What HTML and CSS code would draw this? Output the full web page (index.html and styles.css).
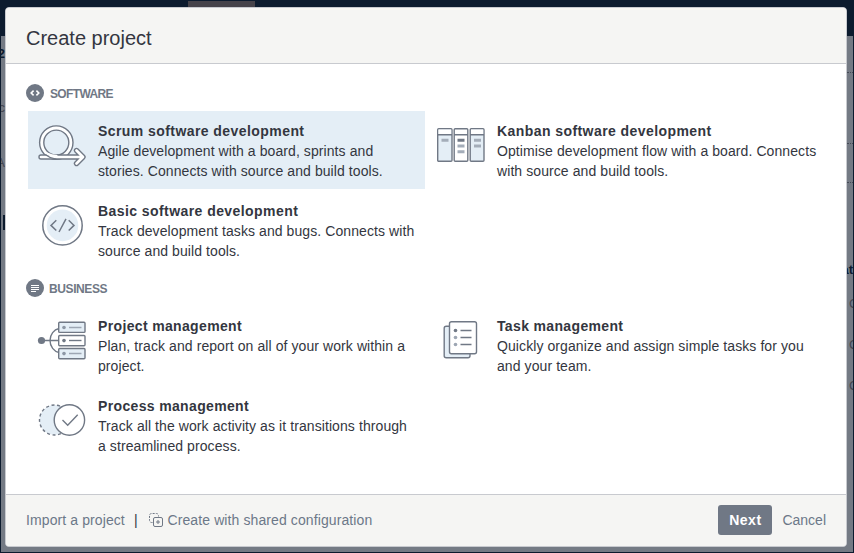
FILE: index.html
```html
<!DOCTYPE html>
<html lang="en">
<head>
<meta charset="utf-8">
<title>Create project</title>
<link rel="stylesheet" href="styles.css">
</head>
<body>
<div class="page">
  <div class="topbar"></div>
  <div class="active-tab"></div>
  <div class="peek left" style="top:46px">2</div>
  <div class="peek left thin" style="top:100px">c</div>
  <div class="peek left thin" style="top:155px">A</div>
  <div class="peek bar"></div>
  <div class="peek right" style="top:262px">at</div>
  <div class="peek right thin" style="top:296px">C</div>
  <div class="peek right thin" style="top:337px">C</div>
  <div class="peek right thin" style="top:378px">C</div>
  <div class="rule" style="top:72px"></div>
  <div class="rule" style="top:143px"></div>
  <div class="rule" style="top:182px"></div>
</div>
<section class="dialog">
  <header class="head"><h1>Create project</h1></header>
  <main class="content">
    <h2 class="group software">
      <svg width="18" height="18" viewBox="0 0 18 18"><circle cx="9" cy="9" r="9" fill="#707885"/><path d="M7.600 6.600 5.200 9l2.400 2.400M10.400 6.600 12.800 9l-2.400 2.400" fill="none" stroke="#fff" stroke-width="1.600"/></svg>
      <span>SOFTWARE</span>
    </h2>
    <div class="grid">
      <article class="item selected">
        <svg class="icon" width="50" height="50" viewBox="0 0 50 50" fill="none" stroke-linejoin="round" stroke-linecap="round">
          <circle cx="19.300" cy="21.600" r="14.600" stroke="#707885" stroke-width="5.600"/>
          <circle cx="19.300" cy="21.600" r="14.600" stroke="#fff" stroke-width="2.800"/>
          <path d="M4 36H45M39.500 29.500l6.500 6.500-6.500 6.500" stroke="#707885" stroke-width="5.400"/>
          <path d="M4 36H45M39.500 29.500l6.500 6.500-6.500 6.500" stroke="#fff" stroke-width="2.700"/>
          <path d="M10.500 32.800c2.600 1.400 5 2.200 8.800 2.200" stroke="#fff" stroke-width="2.600"/>
          <path d="M9 34c3 2.400 6 3.800 10 4.200" stroke="#707885" stroke-width="1.200"/>
        </svg>
        <div><h3>Scrum software development</h3><p>Agile development with a board, sprints and<br>stories. Connects with source and build tools.</p></div>
      </article>
      <article class="item">
        <svg class="icon" width="50" height="50" viewBox="0 0 50 50" stroke="#707885" stroke-width="1.4">
          <rect x="1.700" y="7.700" width="14.300" height="32.500" rx="1" fill="#e4eef6"/>
          <rect x="18.200" y="7.700" width="13.600" height="32.500" rx="1" fill="#fff"/>
          <rect x="34.200" y="7.700" width="13.800" height="32.500" rx="1" fill="#e4eef6"/>
          <path d="M2.500 8.500h12.700v4.700H2.500zM35 8.500h12.200v4.700H35z" fill="#fff" stroke="none"/>
          <path d="M2 13.700h14M18 13.700h14M34 13.700h14"/>
          <path d="M5.500 19.300h7M38 19.300h7M38 25h7M21.500 25h7M21.500 30.700h7" stroke="#a4adb9" stroke-width="3"/>
          <path d="M21.500 19.300h7" stroke-width="3"/>
        </svg>
        <div><h3>Kanban software development</h3><p>Optimise development flow with a board. Connects<br>with source and build tools.</p></div>
      </article>
      <article class="item">
        <svg class="icon" width="50" height="50" viewBox="0 0 50 50" fill="none" stroke="#707885" stroke-width="1.5">
          <circle cx="25.500" cy="24.400" r="19.700" fill="#fff"/><circle cx="25.500" cy="24.400" r="15.800" fill="#e4eef6" stroke="none"/>
          <path d="m19.300 19.300-5.300 5.100 5.300 5.100m12.400-10.200 5.300 5.100-5.300 5.100M29 17.800l-7 13.200"/>
        </svg>
        <div><h3>Basic software development</h3><p>Track development tasks and bugs. Connects with<br>source and build tools.</p></div>
      </article>
    </div>
    <h2 class="group business">
      <svg width="18" height="18" viewBox="0 0 18 18"><circle cx="9" cy="9" r="9" fill="#707885"/><path d="M5 6.500h8M5 8.500h8M5 10.500h8M5 12.500h5" stroke="#fff" stroke-width="1"/></svg>
      <span>BUSINESS</span>
    </h2>
    <div class="grid managed">
      <article class="item">
        <svg class="icon" width="50" height="50" viewBox="0 0 50 50" fill="none" stroke="#707885" stroke-width="1.4">
          <path d="M4 24.500h18M22 12.500c-5 1-9 6-9 12s4 11 9 12"/><circle cx="4.500" cy="24.500" r="3.600" fill="#707885" stroke="none"/>
          <rect x="21.700" y="6.200" width="26.300" height="10.200" rx="1" fill="#e4eef6"/><rect x="21.700" y="19.500" width="26.300" height="10.200" rx="1" fill="#fff"/><rect x="21.700" y="32.500" width="26.300" height="10.200" rx="1" fill="#e4eef6"/>
          <g fill="#8d97a5" stroke="none"><circle cx="27" cy="11.500" r="1.800"/><circle cx="27" cy="24.600" r="1.800" fill="#707885"/><circle cx="27" cy="37.600" r="1.800"/></g>
          <path d="M32 11.500h12.500M32 37.500h12.500" stroke="#9da6b3"/><path d="M32 24.500h12.500"/>
        </svg>
        <div><h3>Project management</h3><p>Plan, track and report on all of your work within a<br>project.</p></div>
      </article>
      <article class="item">
        <svg class="icon" width="50" height="50" viewBox="0 0 50 50" stroke="#707885" stroke-width="1.4">
          <rect x="8.200" y="10.200" width="25.800" height="31.500" rx="2" fill="#e4eef6"/><rect x="13.500" y="5.700" width="27" height="32" rx="2" fill="#fff"/>
          <g stroke="none" fill="#707885"><circle cx="19.500" cy="14.500" r="1.800"/><circle cx="19.500" cy="21.500" r="1.800" fill="#9da6b3"/><circle cx="19.500" cy="28.500" r="1.800" fill="#9da6b3"/></g><path d="M24.500 14.500H35.500M24.500 21.500H35.500M24.500 28.500H35.500"/>
        </svg>
        <div><h3>Task management</h3><p>Quickly organize and assign simple tasks for you<br>and your team.</p></div>
      </article>
      <article class="item">
        <svg class="icon" width="50" height="50" viewBox="0 0 50 50" fill="none" stroke="#707885" stroke-width="1.4">
          <circle cx="17.500" cy="24" r="15" fill="#e4eef6" stroke-dasharray="3 2.600"/><circle cx="32.400" cy="24" r="15.200" fill="#fff"/><path d="m25.500 24 5.200 5.200 10-10.400"/>
        </svg>
        <div><h3>Process management</h3><p>Track all the work activity as it transitions through<br>a streamlined process.</p></div>
      </article>
    </div>
  </main>
  <footer class="foot">
    <a class="import">Import a project</a><span class="sep">|</span>
    <svg class="share" width="14" height="14" viewBox="0 0 14 14" fill="none" stroke="#707885"><path d="M3.500 9.500h-1a2 2 0 0 1-2-2v-5a2 2 0 0 1 2-2h5a2 2 0 0 1 2 2v1" stroke-dasharray="2 1.200"/><rect x="4.500" y="4.500" width="9" height="9" rx="1.500"/><path d="M9 7v4M7 9h4"/></svg>
    <a class="shared">Create with shared configuration</a>
    <button>Next</button><a class="cancel">Cancel</a>
  </footer>
</section>
</body>
</html>
```

FILE: styles.css
```css
* { box-sizing: border-box; }
body { margin: 0; width: 854px; height: 553px; overflow: hidden; font: 14px/20px "Liberation Sans", Arial, sans-serif; color: #333640; }
.page { position: absolute; inset: 0; background: #747a84; border: 1px solid #0c1b2e; border-top: 0; overflow: hidden; }
.topbar { height: 36px; background: #0c1b2e; }
.active-tab { position: absolute; left: 187px; top: 1px; width: 67px; height: 8px; background: #454249; }
.peek { position: absolute; width: 7px; height: 16px; line-height: 16px; overflow: hidden; font-weight: bold; font-size: 13px; color: #0c1b2e; }
.left { left: -1px; width: 5px; direction: rtl; }
.right { right: 0; width: 6px; direction: rtl; }
.right.thin { width: 4px; direction: ltr; }
.thin { font-weight: normal; color: #444650; }
.bar { left: 2px; top: 215px; width: 2px; height: 15px; background: #0c1b2e; }
.rule { position: absolute; right: 0; width: 6px; border-top: 1px dotted #454a55; }
.dialog { position: relative; display: flex; flex-direction: column; width: 842px; height: 540px; margin: 7px 0 0 5px; border: 1px solid #c8cacf; border-radius: 4px; background: #fff; overflow: hidden; }
.head { height: 56px; padding: 20px 20px 0; background: #f5f5f3; border-bottom: 1px solid #c8cacf; }
h1, h2, h3, p { margin: 0; }
h1 { font-size: 20px; line-height: 20px; font-weight: normal; }
.content { flex: 1; padding: 20px 20px 0; }
.group { display: flex; align-items: center; gap: 6px; height: 18px; font: bold 12px/18px "Liberation Sans", Arial, sans-serif; color: #707885; }
.group span { display: block; padding-top: 1px; }
.software span { letter-spacing: -.65px; }
.software { margin-bottom: 9px; }
.business { margin: 10px 0 9px; gap: 5px; }
.business span { letter-spacing: -.4px; }
.grid { display: grid; grid-template-columns: 397px 397px; grid-auto-rows: 78px; gap: 2px; margin-left: 2px; }
.item { display: flex; padding: 10px 0 0 9px; }
.selected { background: #e4eef6; }
.icon { flex: none; margin: 0 11px 0 0; }
.item > div { width: 330px; white-space: nowrap; }
h3 { font-size: 14px; line-height: 20px; letter-spacing: .43px; }
.managed h3 { letter-spacing: .35px; }
p { letter-spacing: .085px; }
.foot { display: flex; align-items: center; height: 52px; padding: 0 20px; background: #f5f5f3; border-top: 1px solid #c8cacf; color: #6c7888; white-space: nowrap; }
.foot a, .sep { padding-bottom: 2px; }
.import { letter-spacing: .1px; }
.shared { letter-spacing: .1px; }
.sep { margin: 0 11px 0 9px; color: #333640; }
.share { margin: 0 5px 1px 0; }
button { width: 54px; height: 30px; margin-left: auto; margin-bottom: 1px; border: 0; border-radius: 3px; padding: 0; background: #707885; color: #fff; font: bold 14px "Liberation Sans", Arial, sans-serif; letter-spacing: .5px; }
.cancel { margin-left: 10px; }
```
